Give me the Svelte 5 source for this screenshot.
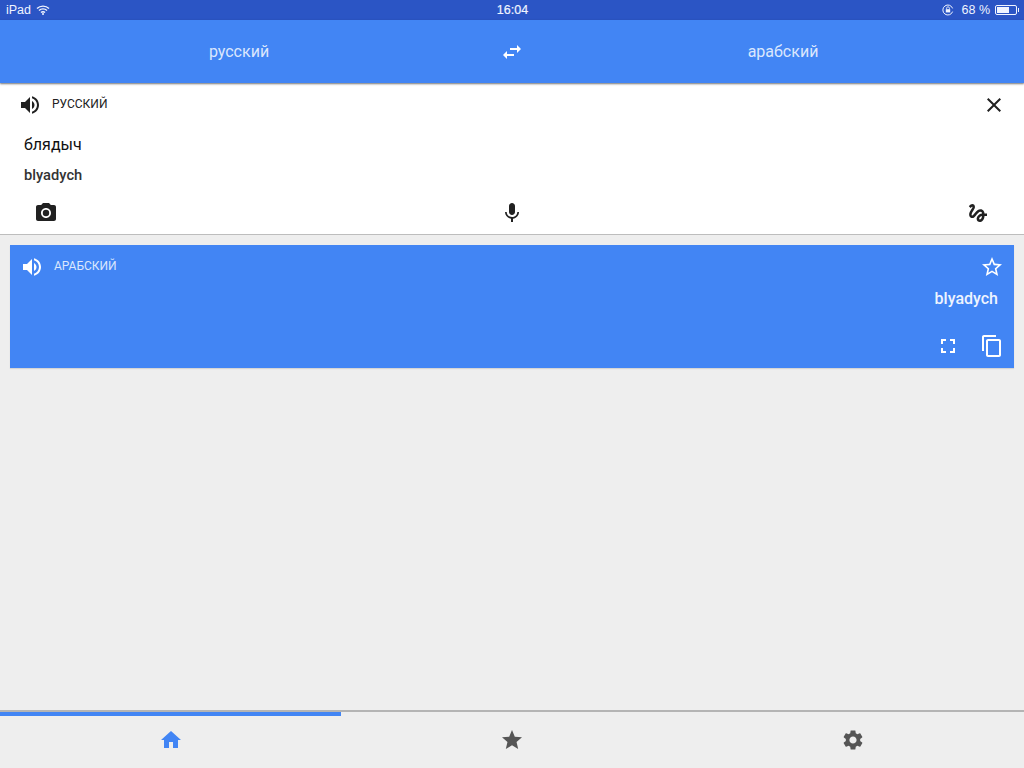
<script>
  const icons = {
    volume: 'M3 9v6h4l5 5V4L7 9H3zm13.5 3c0-1.77-1.02-3.29-2.5-4.03v8.05c1.48-.73 2.5-2.25 2.5-4.02zM14 3.23v2.06c2.89.86 5 3.54 5 6.71s-2.11 5.85-5 6.71v2.06c4.01-.91 7-4.49 7-8.77s-2.99-7.86-7-8.77z',
    close: 'M19 6.41L17.59 5 12 10.59 6.41 5 5 6.41 10.59 12 5 17.59 6.41 19 12 13.41 17.59 19 19 17.59 13.41 12z',
    swap: 'M6.99 11L3 15l3.99 4v-3H14v-2H6.99v-3zM21 9l-3.99-4v3H10v2h7.01v3L21 9z',
    camera: 'M12 8.8a3.2 3.2 0 1 0 0 6.4 3.2 3.2 0 0 0 0-6.4zM9 2L7.17 4H4c-1.1 0-2 .9-2 2v12c0 1.1.9 2 2 2h16c1.1 0 2-.9 2-2V6c0-1.1-.9-2-2-2h-3.17L15 2H9zm3 15c-2.76 0-5-2.24-5-5s2.24-5 5-5 5 2.24 5 5-2.24 5-5 5z',
    mic: 'M12 14c1.66 0 2.99-1.34 2.99-3L15 5c0-1.66-1.34-3-3-3S9 3.34 9 5v6c0 1.66 1.34 3 3 3zm5.3-3c0 3-2.54 5.1-5.3 5.1S6.7 14 6.7 11H5c0 3.41 2.72 6.23 6 6.72V21h2v-3.28c3.28-.48 6-3.3 6-6.72h-1.7z',
    gesture: 'M4.59 6.89c.7-.71 1.4-1.35 1.71-1.22.5.2 0 1.03-.3 1.52-.25.42-2.86 3.89-2.86 6.31 0 1.28.48 2.34 1.34 2.98.75.56 1.74.73 2.64.46 1.07-.31 1.95-1.4 3.06-2.77 1.21-1.49 2.83-3.44 4.08-3.44 1.63 0 1.65 1.01 1.76 1.79-3.78.64-5.38 3.67-5.38 5.37 0 1.7 1.44 3.09 3.21 3.09 1.63 0 4.29-1.33 4.69-6.1H21v-2.5h-2.47c-.15-1.65-1.09-4.2-4.03-4.2-2.25 0-4.18 1.91-4.94 2.84-.58.73-2.06 2.48-2.29 2.72-.25.3-.68.84-1.11.84-.45 0-.72-.83-.36-1.92.35-1.09 1.4-2.86 1.85-3.52.78-1.14 1.3-1.92 1.3-3.28C8.95 3.69 7.31 3 6.44 3 5.12 3 3.97 4 3.72 4.25c-.36.36-.66.66-.88.93l1.75 1.71zm9.29 11.66c-.31 0-.74-.26-.74-.72 0-.6.73-2.2 2.87-2.76-.3 2.69-1.43 3.48-2.13 3.48z',
    starBorder: 'M22 9.24l-7.19-.62L12 2 9.19 8.63 2 9.24l5.46 4.73L5.82 21 12 17.27 18.18 21l-1.63-7.03L22 9.24zM12 15.4l-3.76 2.27 1-4.28-3.32-2.88 4.38-.38L12 6.1l1.71 4.04 4.38.38-3.32 2.88 1 4.28L12 15.4z',
    fullscreen: 'M7 14H5v5h5v-2H7v-3zm-2-4h2V7h3V5H5v5zm12 7h-3v2h5v-5h-2v3zM14 5v2h3v3h2V5h-5z',
    copy: 'M16 1H4c-1.1 0-2 .9-2 2v14h2V3h12V1zm3 4H8c-1.1 0-2 .9-2 2v14c0 1.1.9 2 2 2h11c1.1 0 2-.9 2-2V7c0-1.1-.9-2-2-2zm0 16H8V7h11v14z',
    home: 'M10 20v-6h4v6h5v-8h3L12 3 2 12h3v8z',
    star: 'M12 17.27L18.18 21l-1.64-7.03L22 9.24l-7.19-.61L12 2 9.19 8.63 2 9.24l5.46 4.73L5.82 21z',
    settings: 'M19.14 12.94c.04-.3.06-.61.06-.94 0-.32-.02-.64-.07-.94l2.03-1.58c.18-.14.23-.41.12-.61l-1.92-3.32c-.12-.22-.37-.29-.59-.22l-2.39.96c-.5-.38-1.03-.7-1.62-.94l-.36-2.54c-.04-.24-.24-.41-.48-.41h-3.84c-.24 0-.43.17-.47.41l-.36 2.54c-.59.24-1.13.57-1.62.94l-2.39-.96c-.22-.08-.47 0-.59.22L2.74 8.87c-.12.21-.08.47.12.61l2.03 1.58c-.05.3-.09.63-.09.94s.02.64.07.94l-2.03 1.58c-.18.14-.23.41-.12.61l1.92 3.32c.12.22.37.29.59.22l2.39-.96c.5.38 1.03.7 1.62.94l.36 2.54c.05.24.24.41.48.41h3.84c.24 0 .44-.17.47-.41l.36-2.54c.59-.24 1.13-.56 1.62-.94l2.39.96c.22.08.47 0 .59-.22l1.92-3.32c.12-.22.07-.47-.12-.61l-2.01-1.58zM12 15.6c-1.98 0-3.6-1.62-3.6-3.6s1.62-3.6 3.6-3.6 3.6 1.62 3.6 3.6-1.62 3.6-3.6 3.6z'
  };
</script>

{#snippet icon(name)}
  <svg class="icon" viewBox="0 0 24 24" aria-hidden="true"><path d={icons[name]} /></svg>
{/snippet}

<div class="page">
  <div class="status">
    <div class="status__side">
      <span>iPad</span>
      <svg class="wifi" viewBox="0 0 14 10" aria-hidden="true">
        <path d="M1 3.6a8.5 8.5 0 0 1 12 0M3 5.6a5.6 5.6 0 0 1 8 0M5 7.6a2.8 2.8 0 0 1 4 0" />
        <circle cx="7" cy="9" r="1" />
      </svg>
    </div>
    <span class="status__time">16:04</span>
    <div class="status__side status__side--right">
      <svg class="lock" viewBox="0 0 12 12" aria-hidden="true">
        <path class="lock__ring" d="M10.6 7.6A5 5 0 1 1 10.6 4.4" />
        <rect x="3.8" y="5.2" width="4.4" height="3.2" />
        <path class="lock__ring lock__ring--thin" d="M4.6 5.2V4.2a1.4 1.4 0 0 1 2.8 0v1" />
      </svg>
      <span class="percent">68 %</span>
      <div class="battery"><div class="battery__level" style="width: 68%"></div></div>
      <div class="battery__cap"></div>
    </div>
  </div>

  <header class="bar">
    <div class="bar__lang">русский</div>
    <button class="bar__swap">{@render icon('swap')}</button>
    <div class="bar__lang">арабский</div>
  </header>

  <section class="source">
    <div class="row">
      <span class="speaker">{@render icon('volume')}</span>
      <span class="label">РУССКИЙ</span>
      <span class="close">{@render icon('close')}</span>
    </div>
    <div class="source__text">блядыч</div>
    <div class="source__translit">blyadych</div>
    <div class="tools">
      {@render icon('camera')}
      {@render icon('mic')}
      {@render icon('gesture')}
    </div>
  </section>

  <section class="result">
    <div class="row row--result">
      <span class="speaker">{@render icon('volume')}</span>
      <span class="label">АРАБСКИЙ</span>
      <span class="fav">{@render icon('starBorder')}</span>
    </div>
    <div class="result__text">blyadych</div>
    <div class="result__actions">
      {@render icon('fullscreen')}
      {@render icon('copy')}
    </div>
  </section>

  <div class="spacer"></div>

  <nav class="tabs">
    <div class="tabs__progress"></div>
    <div class="tabs__items">
      <span class="tab tab--active">{@render icon('home')}</span>
      <span class="tab">{@render icon('star')}</span>
      <span class="tab">{@render icon('settings')}</span>
    </div>
  </nav>
</div>

<style>
  :global(body) {
    margin: 0;
    background: #eeeeee;
  }

  .page {
    display: flex;
    flex-direction: column;
    width: 1024px;
    height: 768px;
    overflow: hidden;
    font-family: Roboto, "Liberation Sans", sans-serif;
  }

  .icon {
    display: block;
    width: 24px;
    height: 24px;
    fill: currentColor;
  }

  .status {
    display: grid;
    grid-template-columns: 1fr auto 1fr;
    align-items: center;
    height: 20px;
    padding: 0 5px 0 6px;
    box-sizing: border-box;
    background: #2b55c5;
    color: #f0f4ff;
    font-family: "Liberation Sans", Arial, sans-serif;
    font-size: 12.5px;
  }

  .status__side {
    display: flex;
    align-items: center;
    gap: 5px;
  }

  .status__side--right {
    justify-content: flex-end;
    gap: 0;
  }

  .status__time {
    font-size: 12.5px;
    -webkit-text-stroke: 0.2px #f0f4ff;
  }

  .wifi {
    width: 14px;
    height: 10px;
    fill: #f0f4ff;
  }

  .wifi path {
    fill: none;
    stroke: #f0f4ff;
    stroke-width: 1.4;
  }

  .lock {
    width: 12px;
    height: 12px;
    margin-right: 8px;
    fill: #f0f4ff;
  }

  .lock__ring {
    fill: none;
    stroke: #f0f4ff;
    stroke-width: 1;
  }

  .lock__ring--thin {
    stroke-width: 0.8;
  }

  .percent {
    margin-right: 5px;
  }

  .battery {
    width: 22px;
    height: 10px;
    box-sizing: border-box;
    border: 1px solid #f0f4ff;
    border-radius: 2px;
    padding: 1px;
  }

  .battery__level {
    height: 100%;
    background: #f0f4ff;
  }

  .battery__cap {
    width: 1px;
    height: 4px;
    margin-left: 1px;
    background: #f0f4ff;
  }

  .bar {
    display: grid;
    grid-template-columns: 478px 68px 1fr;
    align-items: center;
    height: 63px;
    padding-right: 4px;
    background: #4285f4;
    color: #dbe7fd;
    font-size: 16px;
    box-shadow: 0 1px 2px rgba(0, 0, 0, 0.5);
    position: relative;
  }

  .bar__lang {
    text-align: center;
  }

  .bar__swap {
    display: flex;
    justify-content: center;
    padding: 0;
    border: 0;
    background: none;
    color: #fff;
  }

  .source {
    margin-top: 1px;
    height: 151px;
    box-sizing: border-box;
    background: #fff;
    border-bottom: 1px solid #bdbdbd;
    color: #212121;
  }

  .row {
    display: flex;
    align-items: center;
    height: 24px;
    padding: 9px 18px 0;
  }

  .label {
    margin: -2px 0 0 10px;
    font-size: 12px;
    line-height: 24px;
  }

  .close {
    margin-left: auto;
  }

  .source__text {
    margin: 18px 0 0 24px;
    font-size: 16px;
    line-height: 20px;
    color: #111;
  }

  .source__translit {
    margin: 10px 0 0 24px;
    font-size: 14.7px;
    font-weight: 500;
    line-height: 20px;
    color: #333;
  }

  .tools {
    display: flex;
    justify-content: space-between;
    padding: 16px 34px 0;
  }

  .result {
    margin: 10px 10px 0;
    height: 123px;
    box-sizing: border-box;
    background: #4285f4;
    color: #fff;
    box-shadow: 0 1px 1px rgba(0, 0, 0, 0.1);
  }

  .row--result {
    padding: 10px 10px 0 10px;
  }

  .row--result .label {
    color: #dbe7fd;
  }

  .fav {
    margin-left: auto;
  }

  .result__text {
    margin-top: 10px;
    padding-right: 16px;
    text-align: right;
    font-size: 16px;
    font-weight: 500;
    line-height: 20px;
    color: #eef4ff;
  }

  .result__actions {
    display: flex;
    justify-content: flex-end;
    gap: 20px;
    padding: 25px 10px 0 0;
  }

  .spacer {
    flex: 1;
  }

  .tabs {
    height: 58px;
    border-top: 2px solid #b4b4b4;
    box-sizing: border-box;
    background: #eeeeee;
  }

  .tabs__progress {
    width: 341px;
    height: 4px;
    background: #4285f4;
  }

  .tabs__items {
    display: grid;
    grid-template-columns: repeat(3, 1fr);
    padding-top: 12px;
  }

  .tab {
    display: flex;
    justify-content: center;
    color: #555;
  }

  .tab--active {
    color: #4285f4;
  }
</style>
